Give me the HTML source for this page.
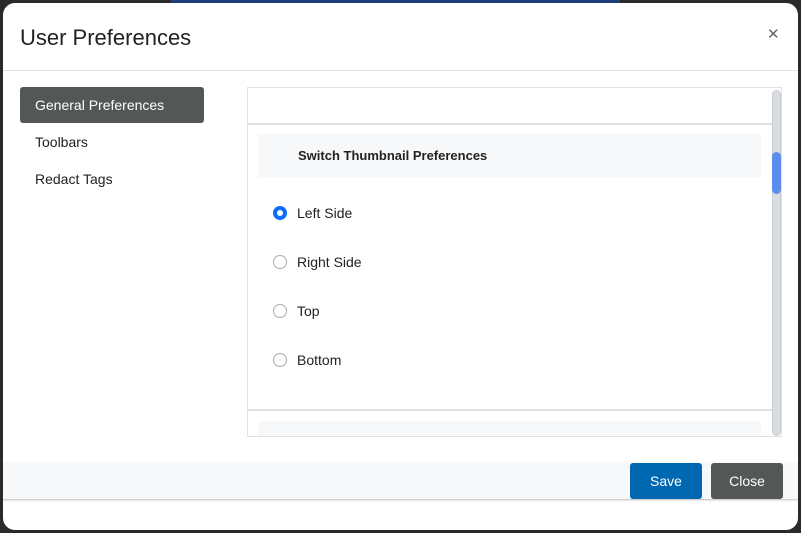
<!DOCTYPE html>
<html><head><style>
body{margin:0;width:801px;height:533px;background:#2a2a2a;font-family:"Liberation Sans",sans-serif;position:relative;overflow:hidden}
.bar{position:absolute;left:171px;top:0;width:449px;height:4px;background:#1c3f7a}
.modal{position:absolute;left:3px;top:3px;width:795px;height:527px;background:#fff;border-radius:12px;overflow:hidden}
.title{position:absolute;left:17px;top:22px;font-size:22px;color:#222}
.x{position:absolute;left:764px;top:22px;font-size:15px;color:#666}
.hr{position:absolute;left:0;top:67px;width:795px;height:1px;background:#dee2e6}
.nav{position:absolute;left:17px;width:184px;height:36px;line-height:36px;padding-left:15px;box-sizing:border-box;font-size:14px;color:#222;border-radius:3px}
.nav.a{background:#535756;color:#fff}
.box{position:absolute;left:244px;top:84px;width:535px;height:350px;border:1px solid #dee2e6;box-sizing:border-box;overflow:hidden}
.line{position:absolute;left:0;width:524px;height:2px;background:#dee2e6}
.hd{position:absolute;left:10px;width:503px;background:#f7f8fa;font-size:13px;font-weight:bold;color:#222}
.r{position:absolute;left:25px;font-size:14px;color:#222}
.r i{display:inline-block;width:14px;height:14px;border:1px solid #aaa;border-radius:50%;box-sizing:border-box;vertical-align:-2px;margin-right:10px}
.r i.on{border:4px solid #0d6efd}
.sb{position:absolute;left:524px;top:2px;width:9px;height:346px;background:#d9dce1;border:1px solid #c8ccd2;box-sizing:border-box;border-radius:5px}
.th{position:absolute;left:524px;top:64px;width:9px;height:42px;background:#5b8def;border-radius:5px}
.foot{position:absolute;left:0;top:460px;width:795px;height:36px;background:#f7f8fa;box-shadow:0 1px 2px #bbb}
.btn{position:absolute;top:460px;height:36px;line-height:36px;text-align:center;color:#fff;font-size:14px;border-radius:3px}
</style></head><body>
<div class="bar"></div>
<div class="modal">
<div class="title">User Preferences</div>
<div class="x">✕</div>
<div class="hr"></div>
<div class="nav a" style="top:84px">General Preferences</div>
<div class="nav" style="top:121px">Toolbars</div>
<div class="nav" style="top:158px">Redact Tags</div>
<div class="box">
<div class="line" style="top:35px"></div>
<div class="hd" style="top:46px;height:43px;line-height:43px;padding-left:40px;box-sizing:border-box">Switch Thumbnail Preferences</div>
<div class="r" style="top:117px"><i class="on"></i>Left Side</div>
<div class="r" style="top:166px"><i></i>Right Side</div>
<div class="r" style="top:215px"><i></i>Top</div>
<div class="r" style="top:264px"><i></i>Bottom</div>
<div class="line" style="top:321px"></div>
<div class="hd" style="top:333px;height:20px"></div>
<div class="sb"></div><div class="th"></div>
</div>
<div class="foot"></div>
<div class="btn" style="left:627px;width:72px;background:#0067b1">Save</div>
<div class="btn" style="left:708px;width:72px;background:#535756">Close</div>
</div>
</body></html>
